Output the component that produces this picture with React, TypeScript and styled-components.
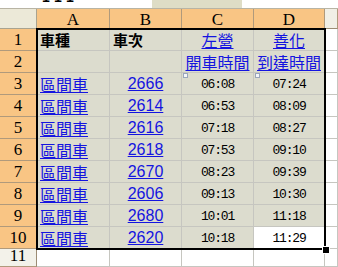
import React from 'react';
import styled, { createGlobalStyle } from 'styled-components';

const GlobalStyle = createGlobalStyle`
  html, body {
    margin: 0;
    padding: 0;
    background: #ffffff;
    overflow: hidden;
  }
`;

const Page = styled.div`
  width: 338px;
  height: 267px;
  overflow: hidden;
  font-family: 'Liberation Sans', 'Noto Sans CJK TC', sans-serif;
`;

const TopStrip = styled.div`
  display: flex;
  height: 8px;
  border-bottom: 1px solid #b8b4a4;
  overflow: hidden;
  background: #ffffff;
`;

const CutText = styled.div`
  width: 152px;
  padding-left: 42px;
  box-sizing: border-box;
  font-size: 14px;
  font-weight: bold;
  line-height: 14px;
  margin-top: -10px;
  letter-spacing: 5px;
  color: #000;
`;

const FormulaBox = styled.div`
  width: 90px;
  background: #deddc6;
`;

const Sheet = styled.div`
  position: relative;
  display: grid;
  grid-template-columns: 37px 73px 72px 72px 71px 1fr;
  grid-template-rows: 20px repeat(10, 22px) 1fr;
  height: 258px;
`;

const Corner = styled.div`
  background: #ece9d8;
  border-right: 1px solid #a9a38f;
  border-bottom: 1px solid #a9a38f;
`;

const ColHead = styled.div<{ $active?: boolean }>`
  display: flex;
  align-items: center;
  justify-content: center;
  background: ${(p) => (p.$active ? '#f9c584' : '#f1efe6')};
  border-right: 1px solid #b09a7c;
  border-bottom: 1px solid #9c8c74;
  font-family: 'Liberation Serif', serif;
  font-size: 17px;
  color: #000;
  padding-top: 2px;
`;

const RowHead = styled.div<{ $active?: boolean }>`
  display: flex;
  align-items: flex-end;
  justify-content: center;
  background: ${(p) => (p.$active ? '#f9c584' : '#f3f2ea')};
  border-right: 1px solid #9c8c74;
  border-bottom: 1px solid #b09a7c;
  font-family: 'Liberation Serif', serif;
  font-size: 17px;
  line-height: 20px;
  color: #000;
  overflow: hidden;
`;

const Cell = styled.div<{ $fill?: boolean; $align?: 'left' | 'center' | 'right' }>`
  position: relative;
  display: flex;
  align-items: flex-end;
  justify-content: ${(p) =>
    p.$align === 'center' ? 'center' : p.$align === 'right' ? 'flex-end' : 'flex-start'};
  padding: 0 3px 1px;
  background: ${(p) => (p.$fill ? '#dcdcce' : '#ffffff')};
  border-right: 1px solid #c6c6c0;
  border-bottom: 1px solid #c6c6c0;
  white-space: nowrap;
`;

const Bold = styled.span`
  font-family: 'Noto Sans CJK TC', sans-serif;
  font-weight: bold;
  font-size: 15px;
  line-height: 18px;
  color: #000;
`;

const Link = styled.span<{ $num?: boolean }>`
  font-family: ${(p) =>
    p.$num ? "'Liberation Sans', sans-serif" : "'Noto Sans CJK TC', sans-serif"};
  font-size: 16px;
  line-height: 18px;
  color: #1414e0;
  text-decoration: underline;
  text-underline-offset: 1px;
`;

const Time = styled.span`
  font-family: 'Liberation Mono', monospace;
  font-size: 13px;
  letter-spacing: -1.2px;
  line-height: 17px;
  color: #000;
`;

const Note = styled.span`
  position: absolute;
  left: 1px;
  top: 0;
  width: 3px;
  height: 3px;
  border: 1px solid #9aa6bb;
  background: #f4f6fa;
`;

const Selection = styled.div`
  position: absolute;
  left: 36px;
  top: 19px;
  width: 290px;
  height: 222px;
  box-sizing: border-box;
  border: 2px solid #000;
  pointer-events: none;
`;

const Handle = styled.div`
  position: absolute;
  left: 322px;
  top: 237px;
  width: 6px;
  height: 6px;
  background: #000;
  border: 1px solid #fff;
  box-sizing: content-box;
`;

const trains = [
  ['2666', '06:08', '07:24'],
  ['2614', '06:53', '08:09'],
  ['2616', '07:18', '08:27'],
  ['2618', '07:53', '09:10'],
  ['2670', '08:23', '09:39'],
  ['2606', '09:13', '10:30'],
  ['2680', '10:01', '11:18'],
  ['2620', '10:18', '11:29'],
];

const App: React.FC = () => (
  <Page>
    <GlobalStyle />
    <TopStrip>
      <CutText>111</CutText>
      <FormulaBox />
    </TopStrip>
    <Sheet>
      <Corner />
      {['A', 'B', 'C', 'D'].map((c) => (
        <ColHead key={c} $active>
          {c}
        </ColHead>
      ))}
      <ColHead />

      <RowHead $active>1</RowHead>
      <Cell $fill>
        <Bold>車種</Bold>
      </Cell>
      <Cell $fill>
        <Bold>車次</Bold>
      </Cell>
      <Cell $fill $align="center">
        <Link>左營</Link>
      </Cell>
      <Cell $fill $align="center">
        <Link>善化</Link>
      </Cell>
      <Cell />

      <RowHead $active>2</RowHead>
      <Cell $fill />
      <Cell $fill />
      <Cell $fill $align="center">
        <Link>開車時間</Link>
      </Cell>
      <Cell $fill $align="center">
        <Link>到達時間</Link>
      </Cell>
      <Cell />

      {trains.map(([no, dep, arr], i) => {
        const last = i === trains.length - 1;
        return (
          <React.Fragment key={no}>
            <RowHead $active>{i + 3}</RowHead>
            <Cell $fill>
              <Link>區間車</Link>
            </Cell>
            <Cell $fill $align="center">
              <Link $num>{no}</Link>
            </Cell>
            <Cell $fill $align="center">
              {i === 0 && <Note />}
              <Time>{dep}</Time>
            </Cell>
            <Cell $fill={!last} $align="center">
              {i === 0 && <Note />}
              <Time>{arr}</Time>
            </Cell>
            <Cell />
          </React.Fragment>
        );
      })}

      <RowHead>11</RowHead>
      <Cell />
      <Cell />
      <Cell />
      <Cell />
      <Cell />

      <Selection />
      <Handle />
    </Sheet>
  </Page>
);

export default App;
